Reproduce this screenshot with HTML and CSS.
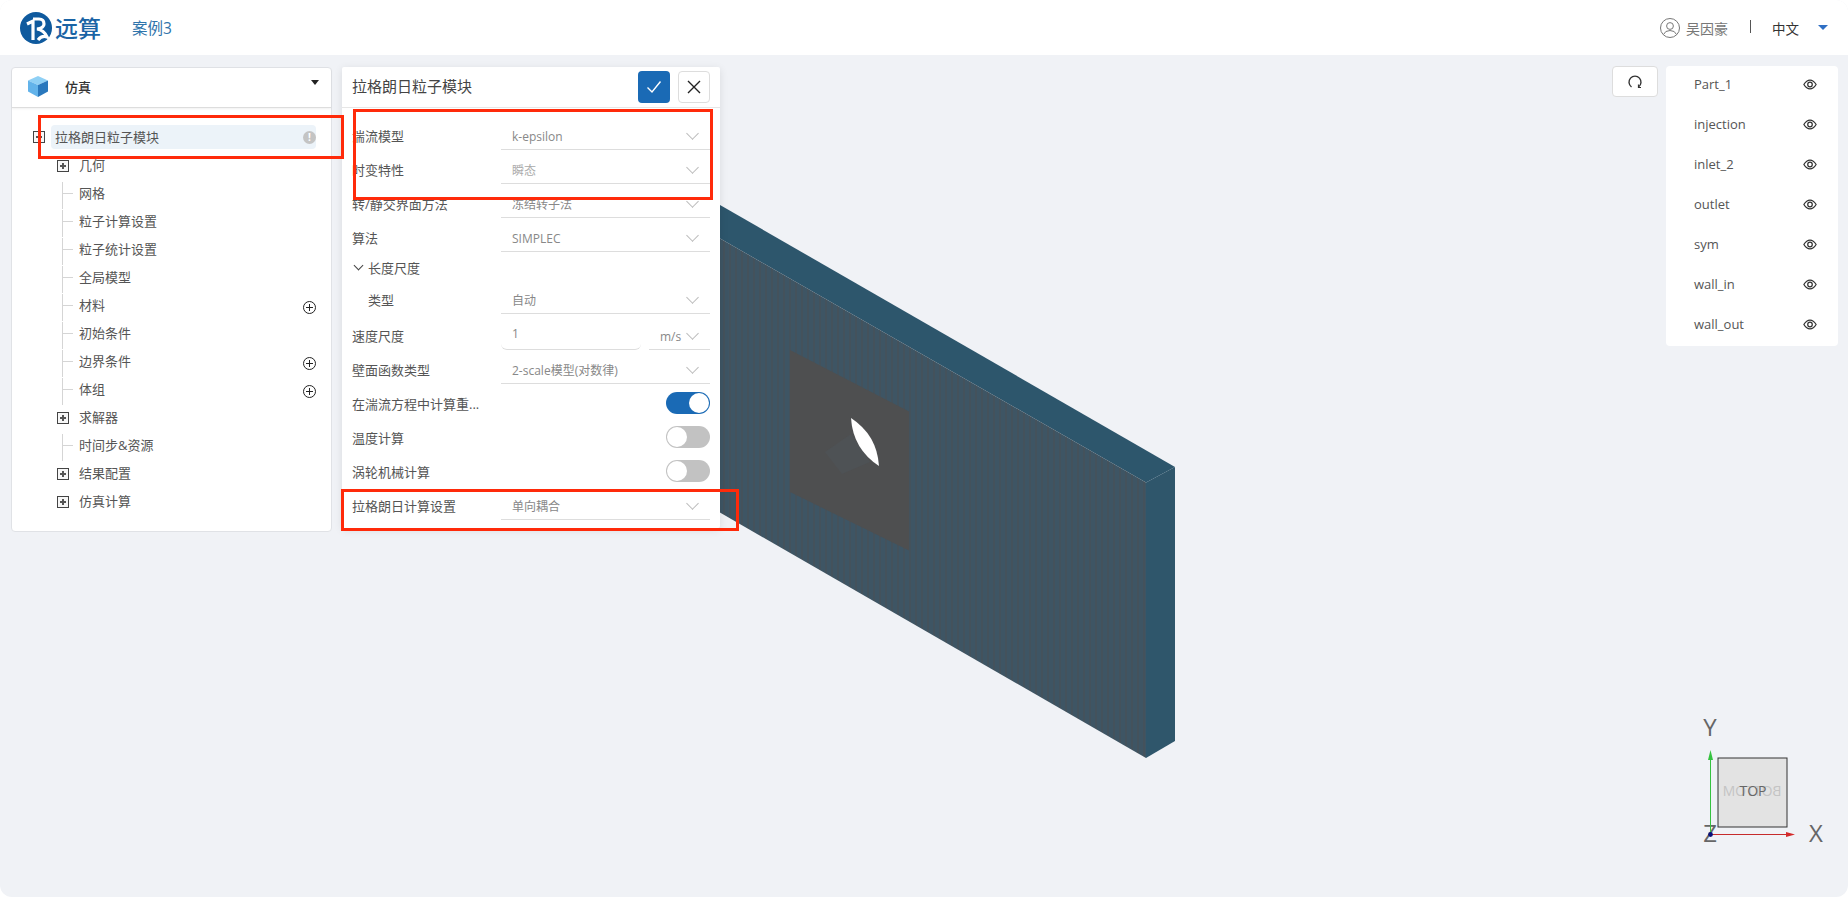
FILE: index.html
```html
<!DOCTYPE html>
<html lang="zh-CN">
<head>
    <meta charset="UTF-8">
    <title>远算</title>
    <link rel="stylesheet" href="styles.css">
</head>
<body>
    <svg class="viewport" width="1848" height="897" viewBox="0 0 1848 897">
        <defs>
            <pattern id="frontMesh" width="6" height="14" patternUnits="userSpaceOnUse">
                <rect width="6" height="14" fill="#3e5564"></rect>
                <rect x="3" width="2" height="14" fill="#44525c"></rect>
            </pattern>
        </defs>
        <polygon points="700,193.5 1175,467 1146,482.5 700,227" fill="#2d566c"></polygon>
        <polygon points="700,227 1146,482.5 1146,758 700,501" fill="url(#frontMesh)"></polygon>
        <polygon points="1146,482.5 1175,467 1175,741 1146,758" fill="#2f566b"></polygon>
        <polygon points="790,350 909,411.5 909,550.5 790,492" fill="#4e4f50"></polygon>
        <polygon points="825,452 851,434 870,462 842,474" fill="#4e5255"></polygon>
        <path d="M851 418 Q877 435 879 466 Q853 449 851 418 Z" fill="#fff"></path>
    </svg>

    <header class="topbar">
        <div class="brand">
            <svg class="logo" width="32" height="32" viewBox="0 0 32 32">
                <circle cx="16" cy="16" r="16" fill="#0f5a9e"></circle>
                <path d="M7 12 L13 9 V28 M13 7 H19 Q24 7 24 12 Q24 16 17 17 Q24 18 27 25 Q22 23 18 28" fill="none" stroke="#fff" stroke-width="3.2"></path>
            </svg>
            <span class="brand-name">远算</span>
            <span class="case-name">案例3</span>
        </div>
        <div class="user-area">
            <svg width="20" height="20" viewBox="0 0 20 20" fill="none" stroke="#777" stroke-width="1">
                <circle cx="10" cy="10" r="9.5"></circle>
                <circle cx="10" cy="8" r="3.4"></circle>
                <path d="M3.5 16.5 Q5 12.5 10 12.5 Q15 12.5 16.5 16.5"></path>
            </svg>
            <span class="user-name">吴因豪</span>
            <span class="divider"></span>
            <span class="lang">中文</span>
            <span class="lang-caret"></span>
        </div>
    </header>

    <main class="workspace">
        <section class="tree-panel">
            <div class="tree-head">
                <svg width="22" height="22" viewBox="0 0 22 22">
                    <polygon points="11,1 21,5.5 11,10 1,5.5" fill="#8fd0f5"></polygon>
                    <polygon points="1,5.5 11,10 11,22 1,16.5" fill="#62b3ea"></polygon>
                    <polygon points="11,10 21,5.5 21,16.5 11,22" fill="#2a78bd"></polygon>
                </svg>
                <span class="tree-title">仿真</span>
                <span class="tree-caret"></span>
            </div>
            <ul class="tree">
                <li class="tree-row root active">
                    <span class="expander"></span>
                    <span class="node-label">拉格朗日粒子模块</span>
                    <span class="info-dot">!</span>
                </li>
                <li class="tree-row branch"><span class="expander"></span><span>几何</span></li>
                <li class="tree-row leaf"><span>网格</span></li>
                <li class="tree-row leaf"><span>粒子计算设置</span></li>
                <li class="tree-row leaf"><span>粒子统计设置</span></li>
                <li class="tree-row leaf"><span>全局模型</span></li>
                <li class="tree-row leaf"><span>材料</span><span class="add-dot"></span></li>
                <li class="tree-row leaf"><span>初始条件</span></li>
                <li class="tree-row leaf"><span>边界条件</span><span class="add-dot"></span></li>
                <li class="tree-row leaf"><span>体组</span><span class="add-dot"></span></li>
                <li class="tree-row branch"><span class="expander"></span><span>求解器</span></li>
                <li class="tree-row leaf"><span>时间步&amp;资源</span></li>
                <li class="tree-row branch"><span class="expander"></span><span>结果配置</span></li>
                <li class="tree-row branch"><span class="expander"></span><span>仿真计算</span></li>
            </ul>
        </section>

        <section class="form-panel">
            <div class="form-head">
                <h2 class="form-title">拉格朗日粒子模块</h2>
                <button class="btn-ok">
                    <svg width="16" height="14" viewBox="0 0 16 14" fill="none" stroke="#fff" stroke-width="1.4"><path d="M1.5 7.5 L6 12 L14.5 1.5"></path></svg>
                </button>
                <button class="btn-close">
                    <svg width="14" height="14" viewBox="0 0 14 14" fill="none" stroke="#222" stroke-width="1.4"><path d="M1 1 L13 13 M13 1 L1 13"></path></svg>
                </button>
            </div>
            <div class="form-body">
                <div class="form-row"><label>湍流模型</label><div class="select">k-epsilon</div></div>
                <div class="form-row"><label>时变特性</label><div class="select faint">瞬态</div></div>
                <div class="form-row"><label>转/静交界面方法</label><div class="select">冻结转子法</div></div>
                <div class="form-row"><label>算法</label><div class="select">SIMPLEC</div></div>
                <div class="form-group"><span class="group-chevron"></span>长度尺度</div>
                <div class="form-row"><label class="indented">类型</label><div class="select">自动</div></div>
                <div class="form-row tall">
                    <label>速度尺度</label>
                    <div class="input-unit">
                        <div class="text-input">1</div>
                        <div class="select unit">m/s</div>
                    </div>
                </div>
                <div class="form-row"><label>壁面函数类型</label><div class="select">2-scale模型(对数律)</div></div>
                <div class="form-row"><label>在湍流方程中计算重...</label><span class="switch on"></span></div>
                <div class="form-row"><label>温度计算</label><span class="switch"></span></div>
                <div class="form-row"><label>涡轮机械计算</label><span class="switch"></span></div>
                <div class="form-row"><label>拉格朗日计算设置</label><div class="select">单向耦合</div></div>
            </div>
        </section>

        <aside class="side">
            <button class="btn-reset">
                <svg width="14" height="14" viewBox="0 0 14 14" fill="none" stroke="#333" stroke-width="1.4">
                    <path d="M3.5 12 A6 6 0 1 1 10.5 12"></path>
                    <path d="M10.5 9.5 V12.5 H13" stroke-width="1.2"></path>
                </svg>
            </button>
            <ul class="parts">
                <li class="part"><span>Part_1</span><svg class="eye" viewBox="0 0 16 12"><use href="#eye"></use></svg></li>
                <li class="part"><span>injection</span><svg class="eye" viewBox="0 0 16 12"><use href="#eye"></use></svg></li>
                <li class="part"><span>inlet_2</span><svg class="eye" viewBox="0 0 16 12"><use href="#eye"></use></svg></li>
                <li class="part"><span>outlet</span><svg class="eye" viewBox="0 0 16 12"><use href="#eye"></use></svg></li>
                <li class="part"><span>sym</span><svg class="eye" viewBox="0 0 16 12"><use href="#eye"></use></svg></li>
                <li class="part"><span>wall_in</span><svg class="eye" viewBox="0 0 16 12"><use href="#eye"></use></svg></li>
                <li class="part"><span>wall_out</span><svg class="eye" viewBox="0 0 16 12"><use href="#eye"></use></svg></li>
            </ul>
        </aside>
    </main>

    <svg class="sprites" width="0" height="0">
        <g id="eye" fill="none" stroke="#333" stroke-width="1.4">
            <path d="M1 6 Q4 1 8 1 Q12 1 15 6 Q12 11 8 11 Q4 11 1 6 Z"></path>
            <circle cx="8" cy="6" r="2.6"></circle>
        </g>
    </svg>

    <svg class="triad" width="140" height="130" viewBox="0 0 140 130">
        <text x="40" y="16" class="axis-name" text-anchor="middle">Y</text>
        <rect x="48" y="38" width="69" height="69" fill="#e3e3e3" stroke="#333" stroke-width="1"></rect>
        <text x="-82" y="76" class="face back" text-anchor="middle" transform="scale(-1,1)">BOTTOM</text>
        <text x="83" y="76" class="face" text-anchor="middle">TOP</text>
        <text x="40" y="122" class="axis-name" text-anchor="middle">Z</text>
        <path d="M40.5 114 V40" stroke="#35c23f" stroke-width="1"></path>
        <polygon points="40.5,30 43,40 38,40" fill="#35c23f"></polygon>
        <path d="M40 114.5 H116" stroke="#c62b2b" stroke-width="1"></path>
        <polygon points="125,114.5 116,112 116,117" fill="#d42a2a"></polygon>
        <circle cx="40.5" cy="114.5" r="2.4" fill="#07107a"></circle>
        <text x="146" y="122" class="axis-name" text-anchor="middle">X</text>
    </svg>

    <div class="mark mark-tree"></div>
    <div class="mark mark-model"></div>
    <div class="mark mark-lagrange"></div>
</body>
</html>
```

FILE: styles.css
```css
* {
    box-sizing: border-box;
}
html {
    background: #fff;
}
body {
    position: relative;
    width: 1848px;
    height: 897px;
    margin: 0;
    overflow: hidden;
    background: #f0f2f6;
    border-radius: 12px;
    font-family: "Open Sans", "Noto Sans CJK SC", sans-serif;
    font-size: 13px;
    color: #555;
}
ul {
    list-style: none;
    margin: 0;
    padding: 0;
}
button {
    display: flex;
    align-items: center;
    justify-content: center;
    padding: 0;
    cursor: pointer;
}
.viewport, .triad {
    position: absolute;
}
.viewport {
    left: 0;
    top: 0;
}
.sprites {
    position: absolute;
}

/* top bar */
.topbar {
    position: relative;
    display: flex;
    justify-content: space-between;
    align-items: center;
    height: 55px;
    padding: 0 20px;
    background: #fff;
}
.brand {
    display: flex;
    align-items: center;
}
.brand-name {
    margin: -2px 0 0 3px;
    font-size: 23px;
    font-weight: 500;
    color: #1a64a5;
}
.case-name {
    margin-left: 31px;
    font-size: 15.5px;
    color: #2f74ab;
}
.user-area {
    display: flex;
    align-items: center;
}
.user-name {
    margin-left: 6px;
    font-size: 14px;
    color: #777;
}
.divider {
    width: 1px;
    height: 13px;
    margin: -3px 21px 0 22px;
    background: #555;
}
.lang {
    font-size: 13.5px;
    color: #333;
}
.lang-caret {
    width: 0;
    height: 0;
    margin-left: 19px;
    border-left: 5px solid transparent;
    border-right: 5px solid transparent;
    border-top: 5px solid #2f6fc4;
}

/* panels row */
.workspace {
    position: relative;
    display: flex;
    align-items: flex-start;
    gap: 10px;
    padding: 12px 10px 0 11px;
}
.tree-panel {
    width: 321px;
    height: 465px;
    background: #fff;
    border: 1px solid #e0e2e6;
    border-radius: 4px;
}
.tree-head {
    position: relative;
    display: flex;
    align-items: center;
    height: 40px;
    padding: 0 0 3px 15px;
    border-bottom: 1px solid #ddd;
    box-shadow: 0 1px 2px rgba(0, 0, 0, 0.06);
}
.tree-title {
    margin-left: 16px;
    font-weight: 500;
    color: #333;
}
.tree-caret {
    position: absolute;
    right: 12px;
    top: 12px;
    border-left: 4px solid transparent;
    border-right: 4px solid transparent;
    border-top: 5px solid #222;
}
.tree {
    padding: 15px 15px 0 21px;
}
.tree-row {
    position: relative;
    display: flex;
    align-items: center;
    height: 28px;
}
.tree-row.root {
    height: 27px;
}
.tree-row.branch {
    padding-left: 24px;
}
.tree-row.leaf {
    padding-left: 46px;
}
.tree-row.leaf::before {
    content: "";
    position: absolute;
    left: 29px;
    top: 4px;
    bottom: -3px;
    width: 1px;
    background: #d5d5d5;
}
.tree-row.leaf::after {
    content: "";
    position: absolute;
    left: 29px;
    top: 15px;
    width: 11px;
    height: 1px;
    background: #d5d5d5;
}
.expander {
    position: relative;
    width: 12px;
    height: 12px;
    margin-right: 10px;
    background: #f7f7f7;
    border: 1px solid #444;
}
.tree-row.branch .expander {
    top: 2px;
}
.expander::before, .expander::after {
    content: "";
    position: absolute;
    background: #555;
}
.expander::before {
    left: 2px;
    top: 4px;
    width: 6px;
    height: 2px;
}
.expander::after {
    left: 4px;
    top: 2px;
    width: 2px;
    height: 6px;
}
.tree-row.root .expander {
    margin-right: 6px;
}
.node-label {
    display: flex;
    flex: 1;
    align-items: center;
    height: 24px;
    padding-left: 4px;
    background: #ecf3f9;
    border-radius: 4px;
}
.info-dot {
    position: absolute;
    right: 0;
    top: 8px;
    width: 13px;
    height: 13px;
    border-radius: 50%;
    background: #c4c4c4;
    color: #fff;
    font-size: 10px;
    font-weight: 700;
    line-height: 13px;
    text-align: center;
}
.add-dot {
    position: absolute;
    right: 0;
    top: 11px;
    width: 13px;
    height: 13px;
    border: 1px solid #222;
    border-radius: 50%;
    background:
        linear-gradient(#222, #222) center / 7px 1px no-repeat,
        linear-gradient(#222, #222) center / 1px 7px no-repeat;
}

/* form */
.form-panel {
    width: 378px;
    height: 461px;
    background: #fff;
    border-radius: 2px;
    box-shadow: 0 2px 8px rgba(0, 0, 0, 0.1);
}
.form-head {
    display: flex;
    align-items: center;
    gap: 8px;
    height: 41px;
    padding: 0 10px;
    border-bottom: 1px solid #e6e6e6;
}
.form-title {
    flex: 1;
    margin: -3px 0 0;
    font-size: 15px;
    font-weight: 400;
    color: #444;
}
.btn-ok, .btn-close {
    width: 32px;
    height: 32px;
    border-radius: 4px;
}
.btn-ok {
    background: #1a6ab5;
    border: none;
}
.btn-close {
    background: #fff;
    border: 1px solid #ddd;
}
.form-body {
    padding: 8px 10px 0;
}
.form-row {
    display: flex;
    justify-content: space-between;
    height: 34px;
    padding-top: 8px;
}
.form-row.tall {
    height: 36px;
    padding-top: 10px;
}
.form-row label {
    width: 149px;
    line-height: 25px;
    flex: none;
}
.form-row label.indented {
    padding-left: 16px;
}
.form-group {
    display: flex;
    align-items: center;
    height: 28px;
    padding-top: 2px;
}
.group-chevron {
    width: 7px;
    height: 7px;
    margin: -4px 6px 0 3px;
    border-right: 1px solid #444;
    border-bottom: 1px solid #444;
    transform: rotate(45deg);
}
.select {
    position: relative;
    flex: 1;
    padding-left: 11px;
    font-size: 12px;
    line-height: 25px;
    color: #888;
    border-bottom: 1px solid #ddd;
}
.select.faint {
    color: #aaa;
}
.select::after {
    content: "";
    position: absolute;
    right: 13px;
    top: 5px;
    width: 8px;
    height: 8px;
    border-right: 1px solid #bbb;
    border-bottom: 1px solid #bbb;
    transform: rotate(45deg);
}
.input-unit {
    display: flex;
    flex: 1;
    gap: 8px;
}
.text-input {
    width: 140px;
    padding-left: 11px;
    font-size: 12px;
    line-height: 20px;
    color: #888;
    border-bottom: 1px solid #ddd;
    border-radius: 0 0 6px 6px;
}
.select.unit {
    padding-left: 11px;
}
.switch {
    position: relative;
    width: 44px;
    height: 22px;
    margin-left: auto;
    border-radius: 11px;
    background: #c2c2c2;
}
.switch::after {
    content: "";
    position: absolute;
    left: 1px;
    top: 1px;
    width: 20px;
    height: 20px;
    border-radius: 50%;
    background: #fff;
}
.switch.on {
    background: #1a6ab5;
}
.switch.on::after {
    left: 23px;
}

/* right column */
.side {
    display: flex;
    align-items: flex-start;
    gap: 8px;
    margin: -1px 0 0 auto;
}
.btn-reset {
    width: 46px;
    height: 31px;
    background: #fff;
    border: 1px solid #ddd;
    border-radius: 4px;
}
.parts {
    width: 172px;
    background: #fff;
    border-radius: 4px;
}
.part {
    display: flex;
    justify-content: space-between;
    align-items: center;
    height: 40px;
    padding: 0 21px 4px 28px;
    color: #555;
}
.eye {
    width: 14px;
    height: 11px;
}

/* orientation cube */
.triad {
    left: 1670px;
    top: 720px;
    overflow: visible;
}
.axis-name {
    font-size: 24px;
    fill: #666;
}
.face {
    font-size: 14px;
    fill: #666;
}
.face.back {
    fill: #c4c4c4;
}

/* red annotation boxes */
.mark {
    position: absolute;
    border: 3px solid #ff2a0a;
}
.mark-tree {
    left: 38px;
    top: 115px;
    width: 306px;
    height: 44px;
}
.mark-model {
    left: 353px;
    top: 109px;
    width: 360px;
    height: 91px;
}
.mark-lagrange {
    left: 341px;
    top: 489px;
    width: 398px;
    height: 42px;
}
```
